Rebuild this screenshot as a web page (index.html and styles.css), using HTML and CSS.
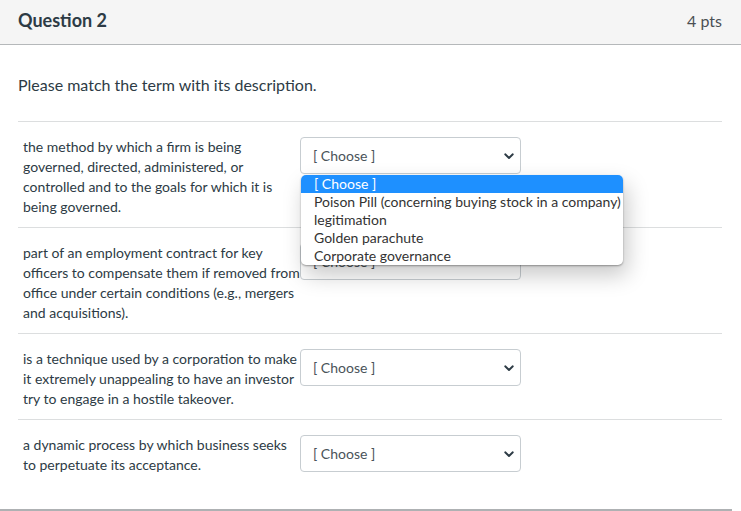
FILE: index.html
```html
<!DOCTYPE html>
<html>
<head>
<meta charset="utf-8">
<link rel="stylesheet" href="styles.css">
</head>
<body>
<div class="question">
  <div class="q-header">
    <span class="q-title">Question 2</span>
    <span class="q-pts">4 pts</span>
  </div>
  <div class="q-body">
    <p class="q-text">Please match the term with its description.</p>
    <div class="answers">
      <div class="row">
        <div class="term">the method by which a firm is being governed, directed, administered, or controlled and to the goals for which it is being governed.</div>
        <div class="select-wrap">
          <div class="select"><span>[ Choose ]</span><svg class="chev" width="10" height="7" viewBox="0 0 10 7"><path d="M1.2 1.3 L5 5 L8.8 1.3" fill="none" stroke="#2d3b45" stroke-width="1.9" stroke-linecap="round" stroke-linejoin="round"/></svg></div>
          <ul class="menu">
            <li class="sel">[ Choose ]</li>
            <li>Poison Pill (concerning buying stock in a company)</li>
            <li>legitimation</li>
            <li>Golden parachute</li>
            <li>Corporate governance</li>
          </ul>
        </div>
      </div>
      <div class="row">
        <div class="term">part of an employment contract for key officers to compensate them if removed from office under certain conditions (e.g., mergers and acquisitions).</div>
        <div class="select-wrap">
          <div class="select"><span>[ Choose ]</span><svg class="chev" width="10" height="7" viewBox="0 0 10 7"><path d="M1.2 1.3 L5 5 L8.8 1.3" fill="none" stroke="#2d3b45" stroke-width="1.9" stroke-linecap="round" stroke-linejoin="round"/></svg></div>
        </div>
      </div>
      <div class="row">
        <div class="term">is a technique used by a corporation to make it extremely unappealing to have an investor try to engage in a hostile takeover.</div>
        <div class="select-wrap">
          <div class="select"><span>[ Choose ]</span><svg class="chev" width="10" height="7" viewBox="0 0 10 7"><path d="M1.2 1.3 L5 5 L8.8 1.3" fill="none" stroke="#2d3b45" stroke-width="1.9" stroke-linecap="round" stroke-linejoin="round"/></svg></div>
        </div>
      </div>
      <div class="row">
        <div class="term">a dynamic process by which business seeks to perpetuate its acceptance.</div>
        <div class="select-wrap">
          <div class="select"><span>[ Choose ]</span><svg class="chev" width="10" height="7" viewBox="0 0 10 7"><path d="M1.2 1.3 L5 5 L8.8 1.3" fill="none" stroke="#2d3b45" stroke-width="1.9" stroke-linecap="round" stroke-linejoin="round"/></svg></div>
        </div>
      </div>
    </div>
  </div>
</div>
</body>
</html>
```
FILE: styles.css
```css
html, body {
  margin: 0;
  padding: 0;
  background: #fff;
}
body {
  font-family: Lato, "Open Sans", sans-serif;
  color: #2d3b45;
  width: 741px;
  height: 511px;
  overflow: hidden;
}
.question {
  border-bottom: 2px solid #aeb1b3;
  width: 732px;
}
.q-header {
  height: 45px;
  background: #f5f5f5;
  border-bottom: 1px solid #b5b8ba;
  display: flex;
  justify-content: space-between;
  align-items: center;
  padding: 0 19px 4px 18px;
  width: 741px;
  box-sizing: border-box;
}
.q-title {
  font-size: 18px;
  font-weight: 700;
  color: #2d3b45;
}
.q-pts {
  font-size: 16px;
  color: #4a4f53;
}
.q-body {
  padding: 0 10px 0 18px;
}
.q-text {
  margin: 0;
  padding-top: 30px;
  font-size: 16px;
  line-height: 20px;
  height: 46px;
}
.answers {
  padding-bottom: 24px;
}
.row {
  display: flex;
  align-items: flex-start;
  border-top: 1px solid #dcdedf;
  padding: 15px 0 10px 5px;
}
.term {
  width: 277px;
  font-size: 14px;
  line-height: 20px;
  color: #2d3b45;
}
.select-wrap {
  position: relative;
}
.select {
  width: 221px;
  height: 37px;
  box-sizing: border-box;
  border: 1px solid #c7cdd1;
  border-radius: 4px;
  background: #fff;
  display: flex;
  align-items: center;
  justify-content: space-between;
  padding: 0 6px 0 12px;
  font-size: 14px;
  color: #4a5359;
}
.chev {
  display: block;
  margin-top: 2px;
}
.menu {
  position: absolute;
  left: 1px;
  top: 38px;
  margin: 0;
  padding: 0;
  list-style: none;
  width: 322px;
  background: #fff;
  border-radius: 5px;
  overflow: hidden;
  box-shadow: 0 1px 2px rgba(0,0,0,0.35), 4px 10px 22px rgba(0,0,0,0.22);
  z-index: 5;
}
.menu li {
  height: 18px;
  line-height: 18px;
  font-size: 14px;
  padding-left: 13px;
  color: #333;
  white-space: nowrap;
}
.menu li.sel {
  background: #1e90ff;
  color: #fff;
}
```
